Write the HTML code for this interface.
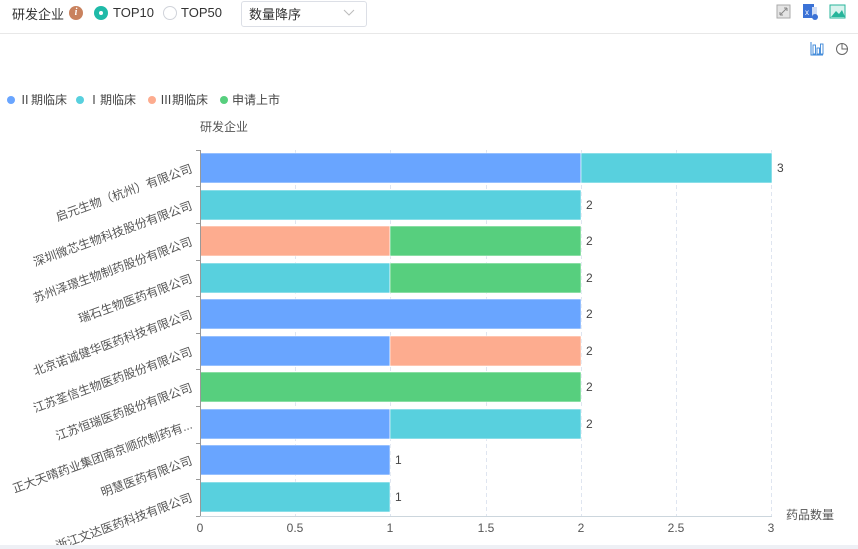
<!DOCTYPE html>
<html><head><meta charset="utf-8"><style>
body{margin:0;width:858px;height:549px;overflow:hidden;background:#fff;font-family:"Liberation Sans","Noto Sans CJK SC",sans-serif;position:relative}
.hdr{position:absolute;left:0;top:0;width:858px;height:33px;border-bottom:1px solid #e8e8e8}
.t{position:absolute;font-size:13px;color:#333}
</style></head><body>
<div class="hdr"></div>
<div class="t" style="left:12px;top:4px">研发企业</div>
<div style="position:absolute;left:69px;top:6px;width:14px;height:14px;border-radius:50%;background:#c9825e;color:#fff;font-size:10px;font-style:italic;font-weight:bold;text-align:center;line-height:14px;font-family:'Liberation Serif',serif">i</div>
<div style="position:absolute;left:94px;top:6px;width:14px;height:14px;border-radius:50%;background:#1fbaa8"><div style="position:absolute;left:5px;top:5px;width:4px;height:4px;border-radius:50%;background:#fff"></div></div>
<div class="t" style="left:113px;top:5px">TOP10</div>
<div style="position:absolute;left:163px;top:6px;width:12px;height:12px;border-radius:50%;border:1px solid #d0d3da"></div>
<div class="t" style="left:181px;top:5px">TOP50</div>
<div style="position:absolute;left:241px;top:1px;width:124px;height:24px;border:1px solid #dcdfe6;border-radius:3px"></div>
<div class="t" style="left:249px;top:4px">数量降序</div>
<svg style="position:absolute;left:343px;top:9px" width="12" height="8"><path d="M1 1 L6 6 L11 1" fill="none" stroke="#bbb" stroke-width="1"/></svg>
<svg style="position:absolute;left:776px;top:4px" width="70" height="18">
<rect x="1" y="1" width="13" height="13" fill="#e4e4e4" stroke="#aaa"/><path d="M4 11 L11 4 M4 11 v-3 M4 11 h3 M11 4 h-3 M11 4 v3" stroke="#888" fill="none"/>
<rect x="27" y="0" width="11" height="14" fill="#3b72d6"/><text x="29" y="11" font-size="8" fill="#fff" font-family="Liberation Sans">x</text><rect x="36" y="3" width="5" height="10" fill="#cfdcf5"/><circle cx="39" cy="13" r="3" fill="#3b72d6"/>
<rect x="54" y="1" width="15" height="13" fill="#d9f3ee" stroke="#27b59b"/><path d="M55 13 L60 7 L63 10 L66 6 L69 13Z" fill="#27b59b"/>
</svg>
<svg style="position:absolute;left:809px;top:41px" width="45" height="16">
<path d="M2 1 v13 h12" stroke="#3a86d8" fill="none"/><rect x="4" y="4" width="2.5" height="9" fill="none" stroke="#3a86d8" stroke-width="0.9"/><rect x="8" y="7" width="2.5" height="6" fill="none" stroke="#3a86d8" stroke-width="0.9"/><rect x="11.5" y="3" width="2.5" height="10" fill="none" stroke="#3a86d8" stroke-width="0.9"/>
<circle cx="33" cy="8" r="5.5" fill="none" stroke="#666"/><path d="M33 2.5 V8 H38.5" fill="none" stroke="#666"/>
</svg>
<svg style="position:absolute;left:0;top:0" width="858" height="549" font-family="Liberation Sans, Noto Sans CJK SC, sans-serif">
<g font-size="12" fill="#444">
<circle cx="11" cy="100" r="4" fill="#69a5ff"/><text x="19" y="104">Ⅱ期临床</text>
<circle cx="80" cy="100" r="4" fill="#58d0de"/><text x="88" y="104">Ⅰ期临床</text>
<circle cx="152" cy="100" r="4" fill="#fdac8f"/><text x="160" y="104">Ⅲ期临床</text>
<circle cx="224" cy="100" r="4" fill="#57cf7e"/><text x="232" y="104">申请上市</text>
</g>
<text x="200" y="131" font-size="12" fill="#555">研发企业</text>
<g stroke="#dfe5f0" stroke-dasharray="4,3">
<line x1="295.5" y1="150" x2="295.5" y2="516"/><line x1="390.5" y1="150" x2="390.5" y2="516"/><line x1="486.5" y1="150" x2="486.5" y2="516"/><line x1="581.5" y1="150" x2="581.5" y2="516"/><line x1="676.5" y1="150" x2="676.5" y2="516"/><line x1="771.5" y1="150" x2="771.5" y2="516"/>
</g>
<g stroke="#fff" stroke-width="0.6">
<rect x="200" y="153" width="381" height="30" fill="#69a5ff"/><rect x="581" y="153" width="191" height="30" fill="#58d0de"/>
<rect x="200" y="190" width="381" height="30" fill="#58d0de"/>
<rect x="200" y="226" width="190" height="30" fill="#fdac8f"/><rect x="390" y="226" width="191" height="30" fill="#57cf7e"/>
<rect x="200" y="263" width="190" height="30" fill="#58d0de"/><rect x="390" y="263" width="191" height="30" fill="#57cf7e"/>
<rect x="200" y="299" width="381" height="30" fill="#69a5ff"/>
<rect x="200" y="336" width="190" height="30" fill="#69a5ff"/><rect x="390" y="336" width="191" height="30" fill="#fdac8f"/>
<rect x="200" y="372" width="381" height="30" fill="#57cf7e"/>
<rect x="200" y="409" width="190" height="30" fill="#69a5ff"/><rect x="390" y="409" width="191" height="30" fill="#58d0de"/>
<rect x="200" y="445" width="190" height="30" fill="#69a5ff"/>
<rect x="200" y="482" width="190" height="30" fill="#58d0de"/>
</g>
<line x1="200.5" y1="150" x2="200.5" y2="516" stroke="#999"/>
<g stroke="#999"><line x1="196" y1="150.5" x2="200" y2="150.5"/><line x1="196" y1="186.5" x2="200" y2="186.5"/><line x1="196" y1="223.5" x2="200" y2="223.5"/><line x1="196" y1="260.5" x2="200" y2="260.5"/><line x1="196" y1="296.5" x2="200" y2="296.5"/><line x1="196" y1="333.5" x2="200" y2="333.5"/><line x1="196" y1="369.5" x2="200" y2="369.5"/><line x1="196" y1="406.5" x2="200" y2="406.5"/><line x1="196" y1="443.5" x2="200" y2="443.5"/><line x1="196" y1="479.5" x2="200" y2="479.5"/><line x1="196" y1="516.5" x2="200" y2="516.5"/></g>
<line x1="200" y1="516.5" x2="772" y2="516.5" stroke="#ccd6dd"/>
<g font-size="12" fill="#444">
<text x="777" y="172">3</text><text x="586" y="209">2</text><text x="586" y="245">2</text><text x="586" y="282">2</text><text x="586" y="318">2</text><text x="586" y="355">2</text><text x="586" y="391">2</text><text x="586" y="428">2</text><text x="395" y="464">1</text><text x="395" y="501">1</text>
</g>
<g font-size="12" fill="#555" text-anchor="middle">
<text x="200" y="532">0</text><text x="295" y="532">0.5</text><text x="390" y="532">1</text><text x="486" y="532">1.5</text><text x="581" y="532">2</text><text x="676" y="532">2.5</text><text x="771" y="532">3</text>
</g>
<text x="786" y="519" font-size="12" fill="#555">药品数量</text>
<g font-size="12" fill="#555" text-anchor="end">
<text transform="translate(193,172) rotate(-20)">启元生物（杭州）有限公司</text>
<text transform="translate(193,209) rotate(-20)">深圳微芯生物科技股份有限公司</text>
<text transform="translate(193,245) rotate(-20)">苏州泽璟生物制药股份有限公司</text>
<text transform="translate(193,282) rotate(-20)">瑞石生物医药有限公司</text>
<text transform="translate(193,318) rotate(-20)">北京诺诚健华医药科技有限公司</text>
<text transform="translate(193,355) rotate(-20)">江苏荃信生物医药股份有限公司</text>
<text transform="translate(193,391) rotate(-20)">江苏恒瑞医药股份有限公司</text>
<text transform="translate(193,428) rotate(-20)">正大天晴药业集团南京顺欣制药有...</text>
<text transform="translate(193,464) rotate(-20)">明慧医药有限公司</text>
<text transform="translate(193,501) rotate(-20)">浙江文达医药科技有限公司</text>
</g>
<rect x="0" y="545" width="858" height="4" fill="#eef0f5"/>
</svg>
</body></html>
